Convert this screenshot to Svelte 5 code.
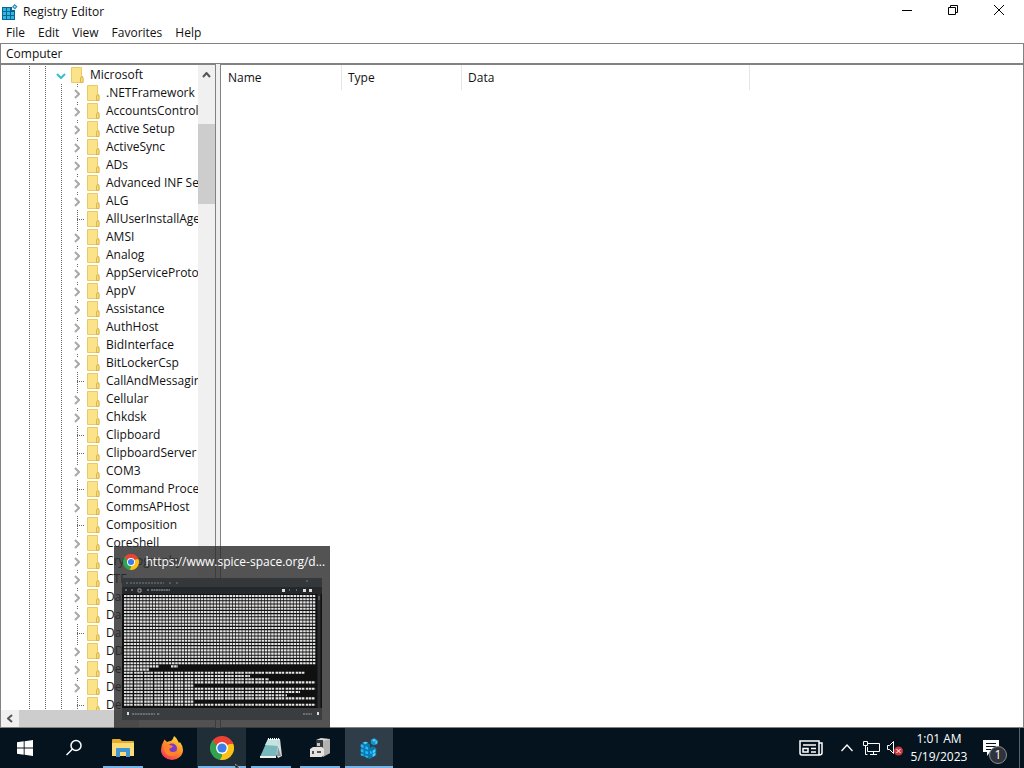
<script lang="ts">
type TreeKey = { name: string; leaf?: boolean };

const menus = ["File", "Edit", "View", "Favorites", "Help"];

const keys: TreeKey[] = [
  { name: ".NETFramework" },
  { name: "AccountsControl" },
  { name: "Active Setup" },
  { name: "ActiveSync" },
  { name: "ADs" },
  { name: "Advanced INF Setup" },
  { name: "ALG" },
  { name: "AllUserInstallAgent", leaf: true },
  { name: "AMSI" },
  { name: "Analog" },
  { name: "AppServiceProtocols" },
  { name: "AppV" },
  { name: "Assistance" },
  { name: "AuthHost" },
  { name: "BidInterface" },
  { name: "BitLockerCsp" },
  { name: "CallAndMessaging", leaf: true },
  { name: "Cellular" },
  { name: "Chkdsk" },
  { name: "Clipboard", leaf: true },
  { name: "ClipboardServer", leaf: true },
  { name: "COM3" },
  { name: "Command Processor", leaf: true },
  { name: "CommsAPHost" },
  { name: "Composition", leaf: true },
  { name: "CoreShell" },
  { name: "Cryptography" },
  { name: "CTF" },
  { name: "DataAccess" },
  { name: "DataMarket" },
  { name: "DataSharing", leaf: true },
  { name: "DDDS" },
  { name: "Defrag" },
  { name: "Device" },
  { name: "DevDiv", leaf: true },
];

// page preview rows: [y, start, end]
const previewRows: [number, number, number][] = [];
for (let i = 0; i < 22; i++) previewRows.push([18 + i * 3.2, 2, 194]);
previewRows.push(
  [88.4, 2, 37], [88.4, 49, 56], [91.6, 2, 27], [94.8, 2, 183],
  [98, 2, 128], [101.2, 2, 147], [104.4, 2, 194], [107.6, 2, 72],
  [110.8, 2, 194], [114, 2, 178], [117.2, 2, 165], [120.4, 2, 193],
  [123.6, 2, 72], [126.8, 2, 194],
);

let address = $state("Computer");
let expanded = $state(true);
let showPreview = $state(true);
</script>

{#snippet folder()}
  <svg class="folder" width="16" height="18" viewBox="0 0 16 18" aria-hidden="true">
    <path d="M2.500 1.500h10v8l1.500 2v5h-11.500z" fill="#fbe38a" stroke="#ebc964" />
    <path d="M11.500 16.500v-4.500l1.200-2 1.300 2v4.500z" fill="#f9dc78" stroke="#d9b751" />
  </svg>
{/snippet}

{#snippet chrome(size: number)}
  <svg class="chrome" width={size} height={size} viewBox="0 0 24 24" aria-hidden="true">
    <path d="M12 12 1.600 6A12 12 0 0 1 22.400 6z" fill="#ea4335" />
    <path d="M12 12 22.400 6A12 12 0 0 1 12 24z" fill="#fbc116" />
    <path d="M12 12v12A12 12 0 0 1 1.600 6z" fill="#31a350" />
    <path d="M12 6h10.400a12 12 0 0 1 .8 2H12z" fill="#ea4335" />
    <path d="M17.200 15 12 24a12 12 0 0 1-2-.2L15.500 14z" fill="#fbc116" />
    <path d="M6.800 15 1.600 6 3 4.200 8.500 13.500z" fill="#31a350" />
    <circle cx="12" cy="12" r="6" fill="#fff" />
    <circle cx="12" cy="12" r="4.600" fill="#3b7de9" />
  </svg>
{/snippet}

<div class="desktop">
  <main class="window">
    <header class="titlebar">
      <svg class="app-icon" width="16" height="16" viewBox="0 0 16 16" aria-hidden="true">
        <path d="M0 3h10v3h3v10H0z" fill="#0c658c" />
        <path d="M1 4h3v3H1zM5 4h3v3H5zM1 8h3v3H1zM5 8h3v3H5zM9 8h3v3H9zM1 12h3v3H1zM5 12h3v3H5zM9 12h3v3H9z" fill="#30b6e5" />
        <path d="m12.500 0 3 2.500-2.500 3-3-2.500z" fill="#258bb7" />
        <path d="m12.700 1.500 1.300 1.200-1.200 1.300-1.300-1.200z" fill="#9be3fa" />
      </svg>
      <h1>Registry Editor</h1>
      <div class="window-controls">
        <button aria-label="Minimize">
          <svg width="10" height="10" viewBox="0 0 10 10"><path d="M0 5.500h10" /></svg>
        </button>
        <button aria-label="Restore">
          <svg width="10" height="10" viewBox="0 0 10 10"><path d="M.5 2.500h7v7h-7zM2.500 2.500v-2h7v7h-2" /></svg>
        </button>
        <button aria-label="Close">
          <svg width="10" height="10" viewBox="0 0 10 10"><path d="m0 0 10 10M10 0 0 10" /></svg>
        </button>
      </div>
    </header>

    <nav class="menubar">
      {#each menus as menu}
        <button>{menu}</button>
      {/each}
    </nav>

    <input class="address" aria-label="Address" bind:value={address} />

    <div class="panes">
      <section class="tree-pane" aria-label="Keys">
        <div class="tree-row-area">
          <ul class="tree">
            <li class="key">
              <span class="guide"></span>
              <span class="guide"></span>
              <button class="toggle open" aria-label="Toggle Microsoft" onclick={() => (expanded = !expanded)}>
                <svg width="10" height="6" viewBox="0 0 10 6"><path d="m1 1 4 4 4-4" /></svg>
              </button>
              {@render folder()}
              <span class="label">Microsoft</span>
            </li>
            {#if expanded}
              {#each keys as key}
                <li class="key">
                  <span class="guide"></span>
                  <span class="guide"></span>
                  <span class="guide"></span>
                  {#if key.leaf}
                    <span class="guide branch"></span>
                  {:else}
                    <button class="toggle" aria-label={`Expand ${key.name}`}>
                      <svg width="6" height="10" viewBox="0 0 6 10"><path d="m1 1 4 4-4 4" /></svg>
                    </button>
                  {/if}
                  {@render folder()}
                  <span class="label">{key.name}</span>
                </li>
              {/each}
            {/if}
          </ul>
          <div class="vscroll">
            <button aria-label="Scroll up">
              <svg width="9" height="6" viewBox="0 0 9 6"><path d="m1 5 3.500-4L8 5" /></svg>
            </button>
            <div class="vthumb"></div>
          </div>
        </div>
        <div class="hscroll">
          <button aria-label="Scroll left">
            <svg width="6" height="9" viewBox="0 0 6 9"><path d="M5 1 1 4.500 5 8" /></svg>
          </button>
          <div class="hthumb"></div>
        </div>
      </section>

      <section class="value-pane" aria-label="Values">
        <table>
          <thead>
            <tr>
              <th class="name">Name</th>
              <th class="type">Type</th>
              <th class="data">Data</th>
            </tr>
          </thead>
        </table>
      </section>
    </div>
  </main>

  <footer class="taskbar">
    <button class="task" aria-label="Start">
      <svg width="16" height="16" viewBox="0 0 16 16">
        <path d="M0 2.300 6.700 1.300v6.300H0zM7.600 1.200 16 0v7.600H7.600zM0 8.500h6.700v6.300L0 13.800zM7.600 8.500H16V16l-8.400-1.200z" fill="#fff" />
      </svg>
    </button>
    <button class="task" aria-label="Search">
      <svg width="18" height="18" viewBox="0 0 18 18" fill="none" stroke="#fff" stroke-width="1.500">
        <circle cx="11" cy="6.500" r="5" /><path d="M7.500 10 1.500 16" />
      </svg>
    </button>
    <button class="task running" aria-label="File Explorer">
      <svg width="22" height="20" viewBox="0 0 22 20">
        <path d="M0 2q0-1 1-1h7l2 2h11q1 0 1 1v14H0z" fill="#e6ad2b" />
        <path d="M0 5h22v13H0z" fill="#fddc77" />
        <path d="M4 11q0-1 1-1h12q1 0 1 1v8h-4v-5H8v5H4z" fill="#3f96d2" />
      </svg>
    </button>
    <button class="task" aria-label="Firefox">
      <svg width="24" height="24" viewBox="0 0 24 24">
        <defs>
          <linearGradient id="fox" x1=".8" y1="0" x2=".2" y2="1">
            <stop offset="0" stop-color="#ffe43f" />
            <stop offset=".5" stop-color="#ff8a27" />
            <stop offset="1" stop-color="#f62e62" />
          </linearGradient>
        </defs>
        <path d="M3.500 5.500 4.500 3.500 7 6q2-1 4-1 2-1 3-5 3 2 4 5l1 2 1-1q3 4 3 8a11 10 0 0 1-22 0q0-5 2.500-8.500z" fill="url(#fox)" />
        <circle cx="12" cy="12.500" r="5" fill="#7a3bc7" />
        <path d="M4 8q4-1 6 1l3 1q-1 2-3.500 2.500Q9 16 13 16q4 0 5-4 1 8-7 8-7-1-7-8z" fill="#ff8428" />
      </svg>
    </button>
    <div class="task-slot">
      <button class="task running hovered" aria-label="Google Chrome" onclick={() => (showPreview = !showPreview)}>
        {@render chrome(24)}
      </button>
      {#if showPreview}
        <div class="preview">
          <div class="preview-title">
            {@render chrome(16)}
            <span>https://www.spice-space.org/d...</span>
          </div>
          <svg class="preview-page" viewBox="0 0 200 142" aria-hidden="true">
            <path d="M0 0h200v9H0z" fill="#34383b" />
            <path d="M0 9h200v7H0z" fill="#25282a" />
            <path d="M0 16h200v114H0z" fill="#101010" />
            <path d="M0 130h200v12H0z" fill="#393d3f" />
            <path d="M4 5h2M8 5h34M47 5h2M54 5h2M184 3h2" stroke="#777d80" stroke-dasharray="2 1" />
            <path d="M3 12h2M9 12h2M25 12h2M29 12h19M174 12h1M167 12h1" stroke="#a8acae" stroke-dasharray="2 .5" />
            <path d="M16 11h3v3h-3z" fill="none" stroke="#999" />
            <path d="M160 11h3v3h-3zM181 11h3v3h-3zM187 11h3v3h-3z" fill="#ddd" />
            {#each previewRows as [y, start, end]}
              <path
                d={`M${start} ${y}H${end}`}
                stroke="#e4e4e4"
                stroke-width="2.100"
                stroke-dasharray={y > 92 ? "2.500 .6 2.500 .6 2.500 1.400" : "2.500 .7"}
              />
            {/each}
            <path d="M197 16v114" stroke="#292c2e" stroke-width="3" />
            <path d="M197 18v4" stroke="#777" stroke-width="1" />
            <path d="M5 134h2v3H5zM195 134h2v3h-2z" fill="#ddd" />
            <path d="M10 136h23M35 136h3M181 136h9" stroke="#a0a4a6" stroke-dasharray="2 .7" />
          </svg>
        </div>
      {/if}
      <svg class="cursor" width="7" height="4" viewBox="0 0 7 4" aria-hidden="true">
        <path d="M0 0v4h5z" fill="#111" stroke="#e8eef4" stroke-width=".5" />
      </svg>
    </div>
    <button class="task running" aria-label="Notepad">
      <svg width="24" height="24" viewBox="0 0 24 24">
        <path d="M9 3h12l2 17-4 2z" fill="#d7dcdc" />
        <path d="M9 3h11l-3 18H1z" fill="#77b8bc" />
        <path d="M9 3h11l-1 7L6 9z" fill="#c5e4e1" />
        <path d="M1 20h16v2H1z" fill="#eef0ee" />
        <path d="M9 3h12" stroke="#fff" stroke-width="2" stroke-dasharray="1 1" />
        <path d="m19 11 3 9h-4z" fill="#899596" />
      </svg>
    </button>
    <button class="task running" aria-label="Devices">
      <svg width="24" height="24" viewBox="0 0 24 24">
        <path d="m8 4 5-2 9 1v14l-9 4-5-2z" fill="#dcdada" />
        <path d="m15 5 7-2v14l-7 4z" fill="#b3b1b0" />
        <path d="M8 4h7v9H8z" fill="#383b3d" />
        <path d="M9 7h3v3H9z" fill="#c7c7c7" />
        <path d="m2 13 3-2h9l2 2v6l-3 2H2z" fill="#e5e3e0" />
        <path d="M4 15h2v3H4zM9 15h4v2H9z" fill="#555" />
      </svg>
    </button>
    <button class="task running active" aria-label="Registry Editor">
      <svg width="20" height="22" viewBox="0 0 22 24">
        <path d="m2 8 5-3 5 3v4l3-2 4 2v8l-7 4-10-4z" fill="#087bb4" />
        <path d="m2 8 3 1v3l-3-1zM7 10l3 1v3l-3-1zM2 13l3 1v3l-3-1zM7 15l3 1v3l-3-1zM2 18l3 1v2l-3-1zM7 20l3 1v2l-3-1zM12 15l2 1v3l-2-1z" fill="#27b9f3" />
        <path d="m15 15 3-2v3l-3 2zM15 19l3-2v3l-3 2zM4 6l3-1 3 1-3 2z" fill="#58cef7" />
        <path d="m13 3 4-2 4 3-1 4-4 1-3-2z" fill="#1395cb" />
        <path d="m14 3 3-1 2 2-3 1zM18 5l2-1v3l-2 1z" fill="#55c9ef" />
      </svg>
    </button>

    <div class="tray">
      <button class="news" aria-label="News and interests">
        <svg width="24" height="16" viewBox="0 0 24 16" fill="none" stroke="#fff" stroke-width="1.500">
          <path d="M1 1h19v14H3q-2 0-2-2zM20 3h3v10q0 2-3 2M4 5h13M4 8.500h5v3.500H4zM12 8.500h5M12 12h5" />
        </svg>
      </button>
      <button class="tray-icon" aria-label="Show hidden icons">
        <svg width="12" height="8" viewBox="0 0 12 8" fill="none" stroke="#fff" stroke-width="1.300"><path d="m.5 7 5.500-6 5.500 6" /></svg>
      </button>
      <button class="tray-icon" aria-label="Network">
        <svg width="17" height="14" viewBox="0 0 17 14" fill="none" stroke="#fff">
          <path d="M5 2.500h11.500v8H4.500V6M10.500 10.500v3M7 13.500h7M.5.5h4v4h-4zM2.500 4.500v9h2" />
        </svg>
      </button>
      <button class="tray-icon" aria-label="Volume">
        <svg width="18" height="16" viewBox="0 0 18 16">
          <path d="M1.500 5.500h2l4-4v12l-4-4h-2z" fill="none" stroke="#fff" />
          <circle cx="12.500" cy="11" r="4.500" fill="#c9393d" />
          <path d="m10.500 9 4 4M14.500 9l-4 4" stroke="#fff" />
        </svg>
      </button>
      <button class="clock">
        <span>1:01 AM</span>
        <span>5/19/2023</span>
      </button>
      <button class="notifications" aria-label="Notifications">
        <svg width="18" height="18" viewBox="0 0 18 18">
          <path d="M1 1h16v12H8l-3 4v-4H1z" fill="#fff" />
          <path d="M4 4.500h10M4 7.500h10M4 10.500h6" stroke="#04121f" />
        </svg>
        <span class="badge">1</span>
      </button>
      <button class="show-desktop" aria-label="Show desktop"></button>
    </div>
  </footer>
</div>

<style>
  :global(body) {
    margin: 0;
  }

  .desktop {
    display: flex;
    flex-direction: column;
    height: 100vh;
    overflow: hidden;
    font-family: "Open Sans", "Noto Sans", sans-serif;
    font-size: 12px;
    line-height: 18px;
    color: #111;
    background: #fff;
  }

  button {
    border: none;
    padding: 0;
    margin: 0;
    background: none;
    font: inherit;
    color: inherit;
  }

  .window {
    flex: 1;
    min-height: 0;
    display: flex;
    flex-direction: column;
  }

  .titlebar {
    display: flex;
    align-items: center;
    height: 23px;
    padding: 0 2px;
  }

  .app-icon {
    margin-right: 5px;
  }

  h1 {
    margin: 0;
    font-size: 12px;
    font-weight: 400;
  }

  .window-controls {
    display: flex;
    margin-left: auto;
    margin-bottom: 4px;
  }

  .window-controls button {
    display: grid;
    place-items: center;
    width: 46px;
    height: 19px;
  }

  .window-controls svg {
    fill: none;
    stroke: #000;
  }

  .menubar {
    display: flex;
    height: 20px;
    gap: 13px;
    padding-left: 6px;
  }

  .address {
    box-sizing: border-box;
    width: 100%;
    height: 21px;
    border: 1px solid #828282;
    padding: 0 5px;
    font: inherit;
    color: inherit;
    background: #fff;
    outline: none;
  }

  .panes {
    flex: 1;
    min-height: 0;
    display: flex;
    gap: 4px;
    background: #f0f0f0;
  }

  .tree-pane,
  .value-pane {
    box-sizing: border-box;
    border: 1px solid #828282;
    background: #fff;
  }

  .tree-pane {
    display: flex;
    flex-direction: column;
    width: 216px;
  }

  .value-pane {
    flex: 1;
  }

  .tree-row-area {
    flex: 1;
    min-height: 0;
    display: flex;
  }

  .tree {
    flex: 1;
    min-width: 0;
    overflow: hidden;
    list-style: none;
    margin: 0;
    padding: 1px 0 0 20px;
  }

  .key {
    display: flex;
    height: 18px;
    white-space: nowrap;
  }

  .guide,
  .toggle {
    flex: none;
    width: 16px;
    height: 18px;
  }

  .guide {
    background: repeating-linear-gradient(#666 0 1px, transparent 1px 2px) 8px 0 / 1px 18px no-repeat;
  }

  .guide.branch {
    background:
      repeating-linear-gradient(#666 0 1px, transparent 1px 2px) 8px 0 / 1px 18px no-repeat,
      repeating-linear-gradient(90deg, #666 0 1px, transparent 1px 2px) 8px 9px / 8px 1px no-repeat;
  }

  .toggle {
    display: grid;
    place-items: center;
    padding: 2px 1px 0 0;
    background: repeating-linear-gradient(#666 0 1px, transparent 1px 2px) 8px 0 / 1px 3px no-repeat;
  }

  .toggle svg {
    fill: none;
    stroke: #a8a8a8;
    stroke-width: 2;
  }

  .toggle.open {
    background: none;
  }

  .toggle.open svg {
    stroke: #33bfd0;
  }

  .folder {
    flex: none;
    margin-right: 5px;
  }

  .vscroll {
    width: 17px;
    background: #f0f0f0;
  }

  .vscroll button {
    display: grid;
    place-items: center;
    width: 16px;
    height: 19px;
  }

  .vscroll svg,
  .hscroll svg {
    fill: none;
    stroke: #555;
    stroke-width: 2;
  }

  .vthumb {
    height: 80px;
    margin-top: 40px;
    background: #cdcdcd;
  }

  .hscroll {
    display: flex;
    height: 17px;
    background: #f0f0f0;
  }

  .hscroll button {
    display: grid;
    place-items: center;
    width: 18px;
    height: 16px;
  }

  .hthumb {
    width: 120px;
    background: #cdcdcd;
  }

  table {
    border-collapse: separate;
    border-spacing: 0;
    table-layout: fixed;
    width: 529px;
  }

  th {
    box-sizing: border-box;
    height: 25px;
    padding: 0 0 0 6px;
    border-right: 1px solid #e5e5e5;
    text-align: left;
    font-weight: 400;
  }

  th.name {
    width: 121px;
    padding-left: 7px;
  }

  th.type {
    width: 120px;
  }

  .taskbar {
    display: flex;
    gap: 1px;
    height: 40px;
    background: #04131e;
    color: #fff;
  }

  .task-slot {
    position: relative;
  }

  .task {
    display: grid;
    place-items: center;
    width: 48px;
    height: 40px;
    background-position: bottom;
    background-repeat: no-repeat;
  }

  .task.running {
    background-image: linear-gradient(#76b4e8, #76b4e8);
    background-size: 40px 2px;
  }

  .task.active,
  .task.hovered {
    background-color: #2e3d47;
    background-size: 48px 2px;
  }

  .task.hovered {
    background-color: #202e38;
  }

  .cursor {
    position: absolute;
    right: 4px;
    bottom: 0;
  }

  .preview {
    position: absolute;
    left: 50%;
    bottom: 100%;
    transform: translateX(-50%);
    box-sizing: border-box;
    width: 216px;
    padding: 0 8px 8px;
    background: rgba(45, 45, 45, 0.82);
  }

  .preview-title {
    display: flex;
    align-items: center;
    gap: 7px;
    height: 32px;
    padding-left: 1px;
    white-space: nowrap;
  }

  .chrome {
    flex: none;
  }

  .preview-page {
    display: block;
    width: 100%;
  }

  .taskbar .task:first-child {
    width: 49px;
  }

  .tray {
    display: flex;
    align-items: center;
    margin-left: auto;
  }

  .tray button {
    display: grid;
    place-items: center;
    height: 40px;
  }

  .tray .news {
    width: 48px;
  }

  .tray .tray-icon {
    width: 24px;
  }

  .tray .clock {
    align-content: center;
    width: 64px;
  }

  .tray .notifications {
    position: relative;
    width: 48px;
    padding-right: 8px;
  }

  .badge {
    position: absolute;
    right: 12px;
    bottom: 4px;
    box-sizing: border-box;
    width: 18px;
    height: 18px;
    border: 1px solid #8a8f95;
    border-radius: 50%;
    background: #30343a;
    line-height: 16px;
    text-align: center;
  }

  .tray .show-desktop {
    width: 5px;
    border-left: 1px solid #59636c;
  }
</style>
